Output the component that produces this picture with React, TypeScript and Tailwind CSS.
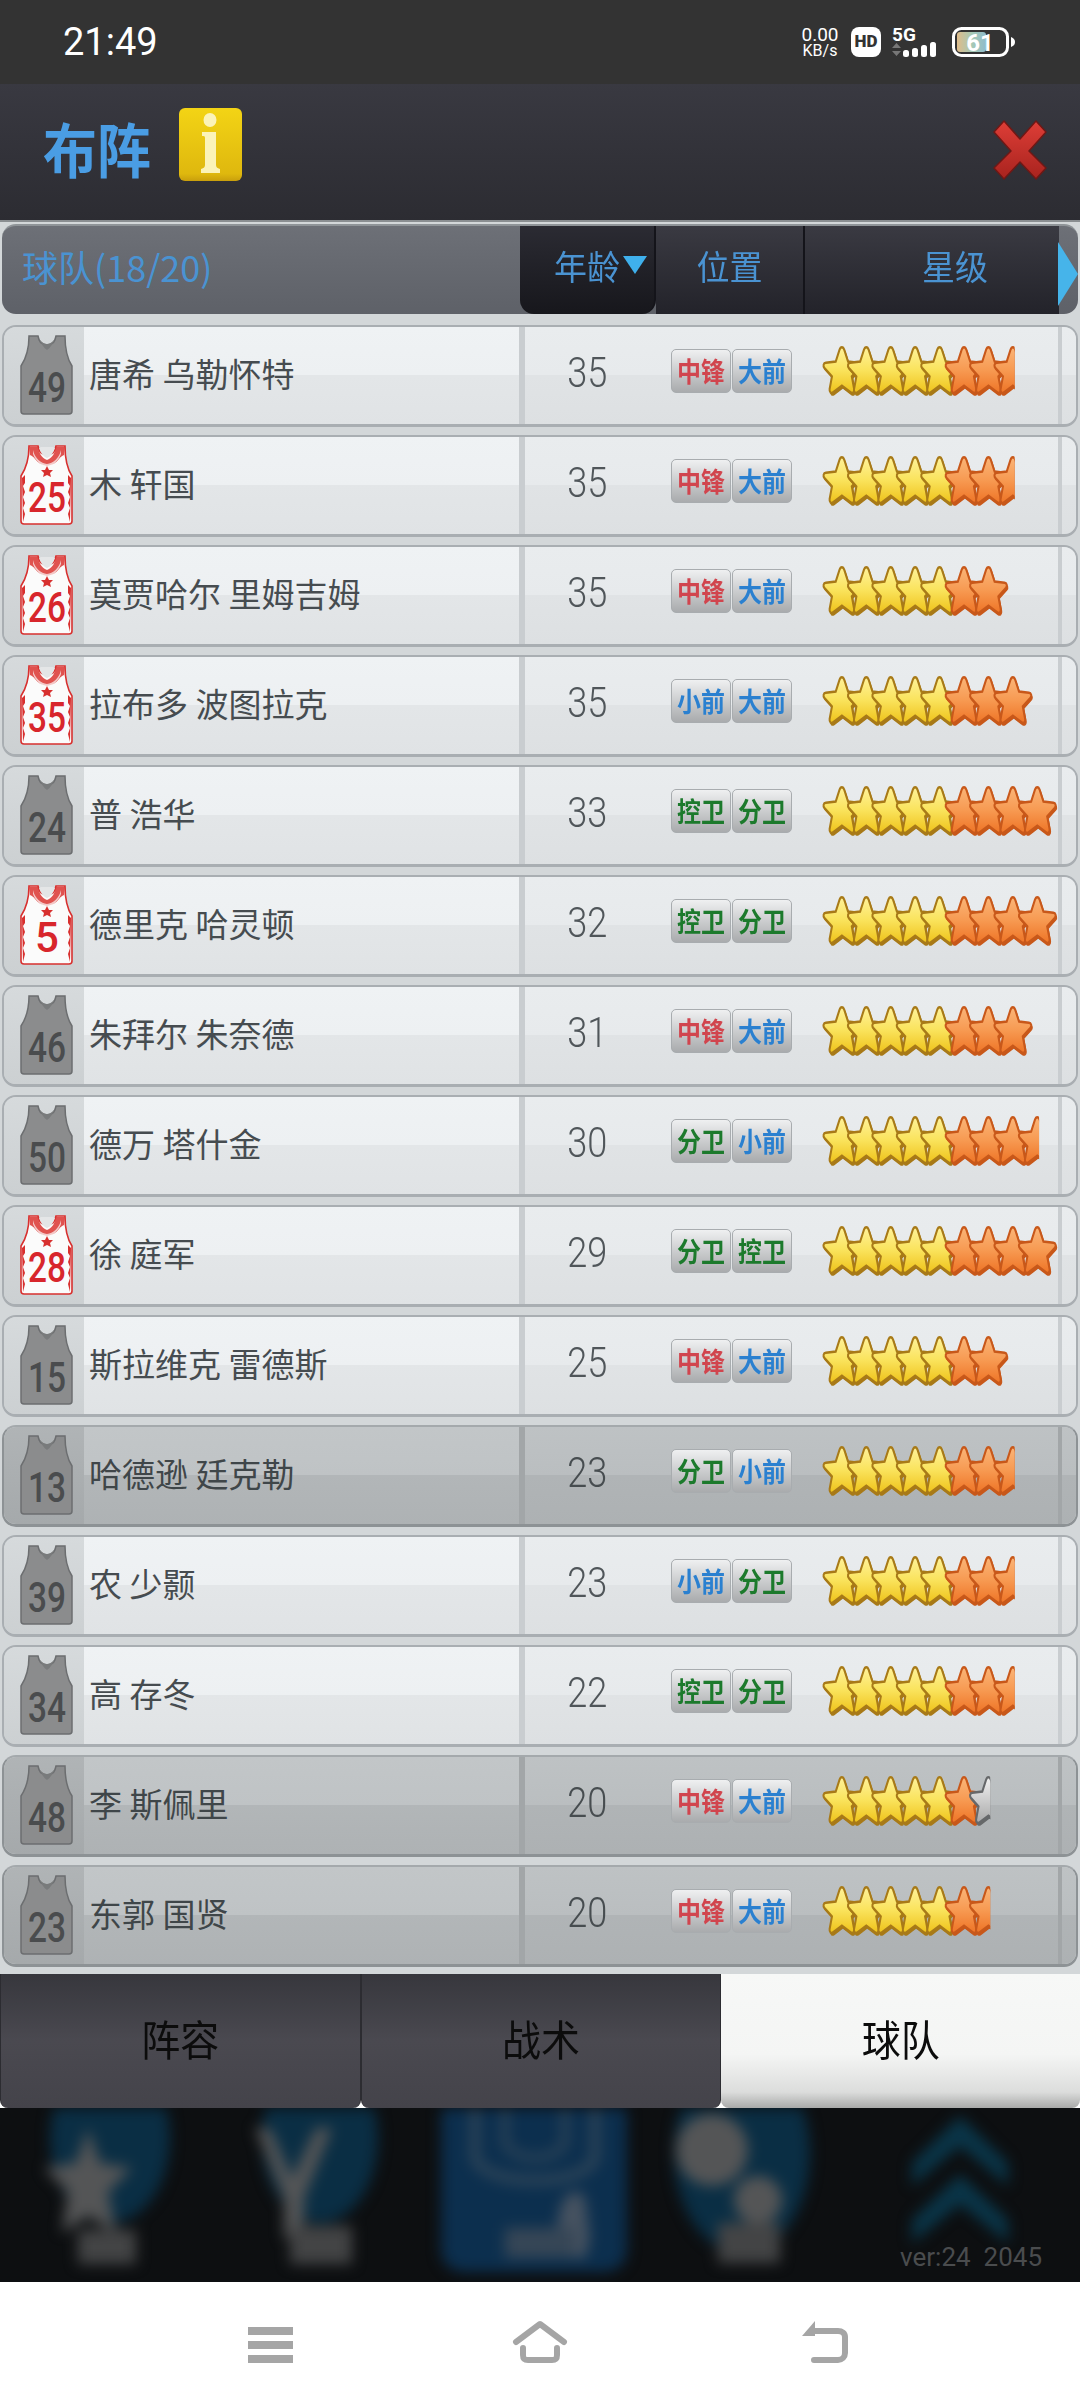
const CJK = "font-['Noto_Sans_CJK_SC','Noto_Sans',sans-serif]";

type Role = "中锋" | "大前" | "小前" | "控卫" | "分卫";

interface Player {
  no: number;
  name: string;
  age: number;
  roles: [Role, Role];
  orange: number;
  gray?: number;
  home?: boolean;
  dim?: boolean;
}

const players: Player[] = [
  { no: 49, name: "唐希 乌勒怀特", age: 35, roles: ["中锋", "大前"], orange: 2.5 },
  { no: 25, name: "木 轩国", age: 35, roles: ["中锋", "大前"], orange: 2.5, home: true },
  { no: 26, name: "莫贾哈尔 里姆吉姆", age: 35, roles: ["中锋", "大前"], orange: 2, home: true },
  { no: 35, name: "拉布多 波图拉克", age: 35, roles: ["小前", "大前"], orange: 3, home: true },
  { no: 24, name: "普 浩华", age: 33, roles: ["控卫", "分卫"], orange: 4 },
  { no: 5, name: "德里克 哈灵顿", age: 32, roles: ["控卫", "分卫"], orange: 4, home: true },
  { no: 46, name: "朱拜尔 朱奈德", age: 31, roles: ["中锋", "大前"], orange: 3 },
  { no: 50, name: "德万 塔什金", age: 30, roles: ["分卫", "小前"], orange: 3.5 },
  { no: 28, name: "徐 庭军", age: 29, roles: ["分卫", "控卫"], orange: 4, home: true },
  { no: 15, name: "斯拉维克 雷德斯", age: 25, roles: ["中锋", "大前"], orange: 2 },
  { no: 13, name: "哈德逊 廷克勒", age: 23, roles: ["分卫", "小前"], orange: 2.5, dim: true },
  { no: 39, name: "农 少颢", age: 23, roles: ["小前", "分卫"], orange: 2.5 },
  { no: 34, name: "高 存冬", age: 22, roles: ["控卫", "分卫"], orange: 2.5 },
  { no: 48, name: "李 斯佩里", age: 20, roles: ["中锋", "大前"], orange: 1, gray: 0.5, dim: true },
  { no: 23, name: "东郭 国贤", age: 20, roles: ["中锋", "大前"], orange: 1.5, dim: true },
];

const roleColor: Record<Role, string> = {
  中锋: "text-[#d1454e]",
  大前: "text-[#2a80d0]",
  小前: "text-[#2a80d0]",
  控卫: "text-[#1c7a2c]",
  分卫: "text-[#1c7a2c]",
};

const STAR =
  "M16 1.5 C17 1.5 17.6 2.2 18 3.2 L21.2 11 L29.6 11.8 C31.6 12 32.2 14 30.8 15.3 L24.4 20.9 L26.4 29.4 C26.8 31.4 25 32.6 23.4 31.6 L16 27.2 L8.6 31.6 C7 32.6 5.2 31.4 5.6 29.4 L7.6 20.9 L1.2 15.3 C-0.2 14 0.4 12 2.4 11.8 L10.8 11 L14 3.2 C14.4 2.2 15 1.5 16 1.5 Z";

function Star({ x, kind, half }: { x: number; kind: "y" | "o" | "g"; half?: boolean }) {
  const stroke = kind === "y" ? "#a87a18" : kind === "o" ? "#c8581a" : "#66686a";
  return (
    <g transform={`translate(${x} 0)`} clipPath={half ? "url(#halfStar)" : undefined}>
      <path d={STAR} transform="translate(0.8 1.4)" fill={stroke} stroke={stroke} strokeWidth="1" />
      <path d={STAR} fill={`url(#star-${kind})`} stroke={stroke} strokeWidth="1.7" />
    </g>
  );
}

function Stars({ orange, gray = 0 }: { orange: number; gray?: number }) {
  const items: { kind: "y" | "o" | "g"; half: boolean }[] = [];
  for (let i = 0; i < 5; i++) items.push({ kind: "y", half: false });
  for (let i = 0; i < Math.floor(orange); i++) items.push({ kind: "o", half: false });
  if (orange % 1) items.push({ kind: "o", half: true });
  if (gray) items.push({ kind: "g", half: true });
  return (
    <svg width="240" height="56" viewBox="0 0 240 56" className="block shrink-0">
      <g transform="translate(1 1) scale(1.18 1.5)">
        {items.map((s, i) => (
          <Star key={i} x={i * 20.7} kind={s.kind} half={s.half} />
        ))}
      </g>
    </svg>
  );
}

function Jersey({ no, home }: { no: number; home?: boolean }) {
  const body =
    "M10 1 L19 1 C20 6 21 9 28 10 C35 9 36 6 37 1 L46 1 C46 12 47 22 53 31 L53 76 C53 78 52 79 50 79 L5 79 C3 79 2 78 2 76 L2 31 C8 22 10 12 10 1 Z";
  return (
    <svg width="56" height="82" viewBox="0 0 56 82" className="block shrink-0">
      {home ? (
        <>
          <path d={body} fill="#fbfbfb" stroke="#d8302f" strokeWidth="1.6" />
          <path d="M10 2 L19 2 C20 7 22 13 28 15 C34 13 36 7 37 2 L46 2 L45 10 C43 11 41 12 40 14 C37 18 33 20 28 21 C23 20 19 18 16 14 C15 12 13 11 11 10 Z" fill="#dd3f3c" fillOpacity="0.9" />
          <path d="M14 5 C16 14 22 18 28 19 C34 18 40 14 42 5 L42 9 C40 15 34 21 28 22 C22 21 16 15 14 9 Z" fill="#fbfbfb" fillOpacity="0.7" />
          <path d="M20 3 C22 9 25 12 28 13 C31 12 34 9 36 3 L34 2 L22 2 Z" fill="#e4e6e7" />
          <path d="M28 21 L30 25 L34 25 L31 28 L32 32 L28 30 L24 32 L25 28 L22 25 L26 25 Z" fill="#d8302f" />
          <path d="M3 33 L6 30 L6 38 L4 41 L6 47 L4 52 L6 58 L4 63 L6 69 L4 77 Z" fill="#d8302f" />
          <path d="M52 33 L49 30 L49 38 L51 41 L49 47 L51 52 L49 58 L51 63 L49 69 L51 77 Z" fill="#d8302f" />
        </>
      ) : (
        <>
          <path d={body} fill="#8b8c8d" stroke="#6c6e70" strokeWidth="1.5" />
          <path d="M20 3 C22 9 25 13 28 15 C31 13 34 9 36 3 C34 7 31 9 28 9 C25 9 22 7 20 3 Z" fill="#797b7c" />
        </>
      )}
      <text
        x="28"
        y="67"
        textAnchor="middle"
        fontFamily="Roboto, sans-serif"
        fontSize="42"
        fontWeight="500"
        fill={home ? "#d8262c" : "#4a4c4e"}
        textLength={no > 9 ? 38 : undefined}
        lengthAdjust="spacingAndGlyphs"
      >
        {no}
      </text>
    </svg>
  );
}

function RoleTag({ role }: { role: Role }) {
  return (
    <span
      className={`flex h-[44px] w-[60px] items-center justify-center rounded-[5px] border border-[#a8acaf] bg-gradient-to-b from-[#eff0f1] to-[#a9abad] text-[24px] font-bold leading-none ${roleColor[role]}`}
    >
      <span className="inline-block scale-y-[1.12]">{role}</span>
    </span>
  );
}

function PlayerRow({ p }: { p: Player }) {
  const nameBg = p.dim
    ? "bg-[linear-gradient(#c2c6c8_0%,#bfc3c5_49%,#b2b6b8_50%,#aeb2b4_100%)]"
    : "bg-[linear-gradient(#eff2f4_0%,#edf0f2_49%,#e3e6e8_50%,#e0e3e5_100%)]";
  const restBg = p.dim
    ? "bg-[linear-gradient(#bec2c4_0%,#babec0_49%,#b0b4b6_50%,#adb1b3_100%)]"
    : "bg-[linear-gradient(#e9ecee_0%,#e7eaec_49%,#e0e3e5_50%,#dde0e2_100%)]";
  const divider = p.dim ? "bg-[#a2a6a8]" : "bg-[#c9cdd0]";
  return (
    <div
      className={`flex h-[102px] items-stretch overflow-hidden rounded-[14px] border-x-2 border-t-2 border-b-[3px] ${
        p.dim ? "border-[#8d9295] border-t-[#a4a9ac]" : "border-[#a9aeb2]"
      }`}
    >
      <div
        className={`flex w-[80px] shrink-0 items-center justify-center pl-[6px] pt-[2px] ${
          p.dim
            ? "bg-gradient-to-b from-[#b0b4b6] to-[#a5a9ab]"
            : "bg-gradient-to-b from-[#d6dadc] to-[#ccd0d2]"
        }`}
      >
        <Jersey no={p.no} home={p.home} />
      </div>
      <div
        className={`flex w-[435px] shrink-0 items-center pb-[4px] pl-[5px] text-[33px] leading-none ${CJK} ${nameBg} ${
          p.dim ? "text-[#3f4649]" : "text-[#464c50]"
        }`}
      >
        {p.name}
      </div>
      <div className={`w-[6px] shrink-0 ${divider}`} />
      <div className={`flex min-w-0 flex-1 items-stretch ${restBg}`}>
        <div className={`flex w-[124px] shrink-0 items-center justify-center pb-[4px] font-['Roboto',sans-serif] text-[42px] font-light leading-none ${p.dim ? "text-[#474d50]" : "text-[#50565a]"}`}>
          <span className="inline-block scale-x-[0.86]">{p.age}</span>
        </div>
        <div className={`flex w-[143px] shrink-0 items-center gap-px pb-[8px] pl-[22px] ${CJK}`}>
          <RoleTag role={p.roles[0]} />
          <RoleTag role={p.roles[1]} />
        </div>
        <div className="flex min-w-0 flex-1 items-center pb-[7px] pl-[30px]">
          <Stars orange={p.orange} gray={p.gray} />
        </div>
        <div className={`w-[4px] shrink-0 ${divider}`} />
        <div className="w-[14px] shrink-0" />
      </div>
    </div>
  );
}

function StatusBar() {
  return (
    <div className="flex h-[84px] items-center justify-between bg-[#333333] pl-[63px] pr-[64px] text-white">
      <span className="font-['Roboto',sans-serif] text-[38px] leading-none">21:49</span>
      <div className="flex items-center font-['Roboto',sans-serif]">
        <div className="flex w-[38px] flex-col items-center">
          <span className="text-[19px] leading-[17px]">0.00</span>
          <span className="text-[16px] leading-[15px]">KB/s</span>
        </div>
        <span className="ml-[12px] flex h-[30px] w-[30px] items-center justify-center rounded-[8px] bg-white text-[17px] font-black text-[#333333]">
          HD
        </span>
        <div className="ml-[11px] flex w-[45px] flex-col">
          <span className="text-[19px] font-bold leading-[15px]">5G</span>
          <svg width="45" height="15" viewBox="0 0 45 15">
            <path d="M4.5 1 L9 6 L0 6 Z M4.5 14 L9 9 L0 9 Z" fill="#777" />
            <rect x="11" y="8" width="6" height="7" rx="2.5" fill="#fff" />
            <rect x="20" y="6" width="6" height="9" rx="2.5" fill="#fff" />
            <rect x="29" y="3" width="6" height="12" rx="2.5" fill="#fff" />
            <rect x="38" y="0" width="6" height="15" rx="2.5" fill="#fff" />
          </svg>
        </div>
        <svg width="64" height="30" viewBox="0 0 64 30" className="ml-[15px]">
          <defs>
            <linearGradient id="battery" x1="0" x2="1" y1="0" y2="0">
              <stop offset="0" stopColor="#dfbc8a" />
              <stop offset="0.5" stopColor="#a7c9b4" />
              <stop offset="1" stopColor="#8fbccb" />
            </linearGradient>
          </defs>
          <rect x="1.5" y="1.5" width="54" height="27" rx="8" fill="none" stroke="#fff" strokeWidth="3" />
          <rect x="5" y="5" width="29" height="20" rx="3" fill="url(#battery)" />
          <text x="28" y="24" textAnchor="middle" fontFamily="Roboto, sans-serif" fontSize="24" fontWeight="700" fill="#fff">
            61
          </text>
          <path d="M59 10 C62 11 63 13 63 15 C63 17 62 19 59 20 Z" fill="#fff" />
        </svg>
      </div>
    </div>
  );
}

function TitleBar() {
  return (
    <div className="flex h-[136px] items-center justify-between bg-gradient-to-b from-[#393941] to-[#2c2c32] pl-[43px] pr-[33px]">
      <div className="flex items-center gap-[28px]">
        <h1 className={`${CJK} -mt-[7px] w-[108px] whitespace-nowrap text-[54px] font-bold leading-none text-[#4a9de4]`}>
          <span className="inline-block scale-y-[1.1]">布阵</span>
        </h1>
        <svg width="63" height="73" viewBox="0 0 63 73" className="-mt-[15px]">
          <defs>
            <linearGradient id="infoBg" x1="0" x2="0" y1="0" y2="1">
              <stop offset="0" stopColor="#f3d415" />
              <stop offset="0.9" stopColor="#dfb80e" />
              <stop offset="1" stopColor="#c99f0c" />
            </linearGradient>
          </defs>
          <rect width="63" height="73" rx="6" fill="url(#infoBg)" />
          <ellipse cx="31" cy="12" rx="6.5" ry="7" fill="#fbf3b8" />
          <path d="M23 24 H37 V57 C37 59 38 60 41 61 V65 H22 V61 C25 60 26 59 26 57 V30 C26 28 25 28 23 28 Z" fill="#fbf3b8" />
        </svg>
      </div>
      <svg width="54" height="60" viewBox="0 0 54 60" className="-mt-[4px]">
        <defs>
          <linearGradient id="closeRed" x1="0" x2="0" y1="0" y2="1">
            <stop offset="0" stopColor="#de3e37" />
            <stop offset="1" stopColor="#a8231e" />
          </linearGradient>
        </defs>
        <path
          d="M11 1 L27 19 L43 1 L53 12 L36 31 L53 48 L43 59 L27 42 L11 59 L1 48 L18 31 L1 12 Z"
          fill="url(#closeRed)"
          stroke="#6f1815"
          strokeWidth="1.5"
          strokeLinejoin="round"
        />
      </svg>
    </div>
  );
}

function ListHeader() {
  return (
    <div className={`relative flex h-[90px] items-stretch rounded-[14px] border-t-2 border-[#8f9498] bg-gradient-to-b from-[#6d7077] to-[#5e6168] ${CJK}`}>
      <div className="flex w-[518px] shrink-0 items-center pb-[8px] pl-[20px] text-[36px] text-[#4a93d2]">
        <span>球队(18/20)</span>
      </div>
      <div className="relative flex w-[136px] shrink-0 items-center rounded-b-[14px] border-r-2 border-[#14141a] bg-gradient-to-b from-[#2b2b33] to-[#17171c] pb-[8px] pl-[34px] text-[33px] text-[#4a93d2]">
        <span className="inline-block scale-y-[1.05]">年龄</span>
        <svg width="24" height="18" viewBox="0 0 24 18" className="absolute right-[7px] top-[30px]">
          <path d="M0 0 H24 L12 18 Z" fill="#3fb0ec" />
        </svg>
      </div>
      <div className="flex w-[149px] shrink-0 items-center justify-center border-r-2 border-[#14141a] bg-gradient-to-b from-[#3a3a42] to-[#23232a] pb-[8px] text-[33px] text-[#4a93d2]">
        <span className="inline-block scale-y-[1.05]">位置</span>
      </div>
      <div className="flex w-[254px] shrink-0 items-center justify-center bg-gradient-to-b from-[#3a3a42] to-[#23232a] pb-[8px] pl-[46px] text-[33px] text-[#4a93d2]">
        <span className="inline-block scale-y-[1.05]">星级</span>
      </div>
      <svg width="20" height="64" viewBox="0 0 20 64" className="absolute right-0 top-[16px]">
        <path d="M0 0 L20 32 L0 64 Z" fill="#46b4ea" />
      </svg>
    </div>
  );
}

function Tab({ label, active }: { label: string; active?: boolean }) {
  return (
    <div
      className={`flex h-[134px] flex-1 items-center justify-center rounded-b-[8px] pb-[6px] ${CJK} text-[39px] leading-none text-[#0c0c0c] ${
        active
          ? "bg-[linear-gradient(#f7f8f7_0%,#f4f5f4_60%,#dcdddc_88%,#a9aaa9_100%)]"
          : "border-x border-[#2c2c31] bg-gradient-to-b from-[#37373d] via-[#4a4950] to-[#44434a]"
      }`}
    >
      <span className="inline-block scale-y-[1.08]">{label}</span>
    </div>
  );
}

function BlurredDock() {
  return (
    <div className="relative h-[174px] overflow-hidden bg-[#0d0f11]">
      <svg width="1080" height="174" viewBox="0 0 1080 174" className="block blur-[7px]">
        <ellipse cx="110" cy="30" rx="60" ry="85" fill="#0a2e44" />
        <path d="M88 20 L100 55 L132 60 L108 84 L116 125 L88 108 L62 125 L68 84 L44 60 L76 55 Z" fill="#545556" />
        <rect x="78" y="122" width="58" height="34" fill="#434445" />
        <ellipse cx="320" cy="30" rx="58" ry="85" fill="#0a2e44" />
        <path d="M255 20 L270 20 L292 70 L316 20 L332 20 L304 90 L304 130 L284 130 L284 90 Z" fill="#545556" />
        <rect x="290" y="118" width="62" height="38" fill="#434445" />
        <rect x="441" y="-14" width="186" height="178" rx="22" fill="#0c2f4e" />
        <path d="M475 0 V50 C485 80 585 80 595 50 V0" fill="none" stroke="#304659" strokeWidth="9" />
        <path d="M505 0 V35 C515 55 555 55 565 35 V0" fill="none" stroke="#304659" strokeWidth="7" />
        <path d="M560 150 C550 100 570 70 585 90 L590 130 L585 150 Z" fill="#465260" />
        <rect x="505" y="120" width="70" height="30" fill="#364656" />
        <ellipse cx="742" cy="45" rx="68" ry="100" fill="#0a2e44" />
        <circle cx="712" cy="42" r="36" fill="#545556" />
        <circle cx="758" cy="92" r="24" fill="#545556" />
        <rect x="718" y="115" width="62" height="40" fill="#434445" />
        <path d="M960 8 L1008 55 L1008 78 L960 38 L912 78 L912 55 Z" fill="#0a3548" />
        <path d="M960 66 L1008 112 L1008 135 L960 96 L912 135 L912 112 Z" fill="#0a3548" />
      </svg>
      <span className="absolute bottom-[12px] right-[38px] font-['Roboto',sans-serif] text-[26px] leading-none text-[#4a4c4e]">
        ver:24&nbsp;&nbsp;2045
      </span>
    </div>
  );
}

function NavBar() {
  return (
    <div className="h-[126px] bg-white">
      <svg width="1080" height="126" viewBox="0 0 1080 126" className="block">
        <g fill="none" stroke="#a5a5a5" strokeWidth="6" strokeLinecap="round" strokeLinejoin="round">
          <path d="M248 49 H293 M248 63 H293 M248 77 H293" strokeLinecap="butt" strokeWidth="8" />
          <path d="M516 60 L540 42 L564 60" />
          <path d="M523 66 V73 C523 77 525 78 528 78 H552 C555 78 557 77 557 73 V66" />
          <path d="M812 49 H838 C842 49 845 51 845 55 V71 C845 75 842 78 838 78 H814" />
        </g>
        <path d="M802 54 L815 39 L815 54 Z" fill="#a5a5a5" />
      </svg>
    </div>
  );
}

function Defs() {
  return (
    <svg width="0" height="0" className="absolute">
      <defs>
        <linearGradient id="star-y" x1="0" x2="0" y1="0" y2="1">
          <stop offset="0" stopColor="#fff29a" />
          <stop offset="0.5" stopColor="#fae35c" />
          <stop offset="1" stopColor="#eec21a" />
        </linearGradient>
        <linearGradient id="star-o" x1="0" x2="0" y1="0" y2="1">
          <stop offset="0" stopColor="#fbb578" />
          <stop offset="0.5" stopColor="#f79a52" />
          <stop offset="1" stopColor="#ee7426" />
        </linearGradient>
        <linearGradient id="star-g" x1="0" x2="0" y1="0" y2="1">
          <stop offset="0" stopColor="#f2f2f2" />
          <stop offset="1" stopColor="#a8a8a8" />
        </linearGradient>
        <clipPath id="halfStar">
          <rect x="-2" y="-2" width="19.5" height="40" />
        </clipPath>
      </defs>
    </svg>
  );
}

export default function App() {
  return (
    <div className="flex h-[2408px] w-[1080px] flex-col overflow-hidden bg-white">
      <Defs />
      <StatusBar />
      <TitleBar />
      <div className="flex h-[1755px] flex-col gap-[8px] border-t-2 border-[#8a8e91] bg-[#d3d7d9] px-[2px] pt-[2px]">
        <ListHeader />
        <div className="flex flex-col gap-[8px] pt-[3px]">
          {players.map((p) => (
            <PlayerRow key={p.no} p={p} />
          ))}
        </div>
      </div>
      <div className="flex">
        <Tab label="阵容" />
        <Tab label="战术" />
        <Tab label="球队" active />
      </div>
      <BlurredDock />
      <NavBar />
    </div>
  );
}
